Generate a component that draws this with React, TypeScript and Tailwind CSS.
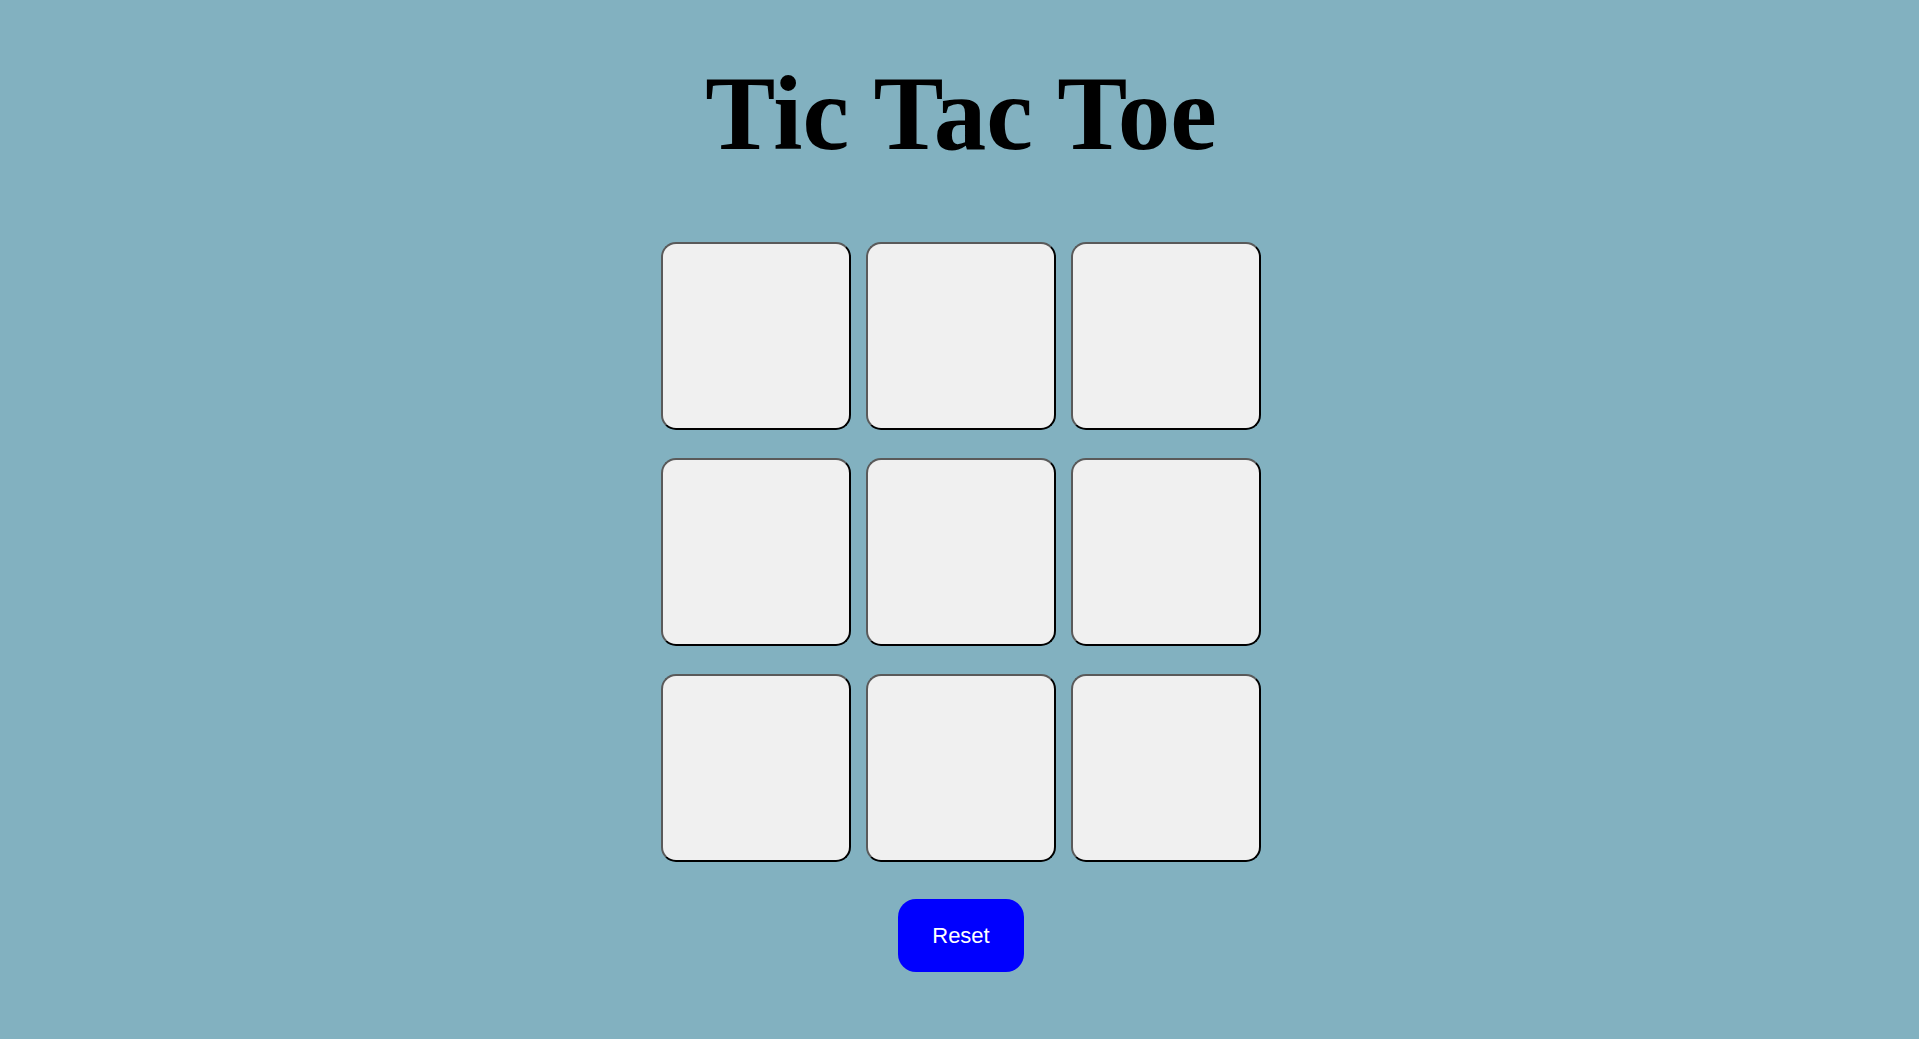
import { useState } from "react";

type Mark = "X" | "O" | null;

export default function App() {
  const [cells, setCells] = useState<Mark[]>(Array(9).fill(null));
  const [turn, setTurn] = useState<"X" | "O">("X");

  function play(i: number) {
    if (cells[i]) return;
    const next = cells.slice();
    next[i] = turn;
    setCells(next);
    setTurn(turn === "X" ? "O" : "X");
  }

  function reset() {
    setCells(Array(9).fill(null));
    setTurn("X");
  }

  return (
    <div className="min-h-screen w-full bg-[#82b1c0] flex flex-col items-center pt-[61px]">
      <h1 className="text-[105px] leading-none font-bold text-black font-['Liberation_Serif','Times_New_Roman',serif] ml-[3px]">
        Tic Tac Toe
      </h1>

      <div className="mt-[76px] grid grid-cols-[190px_190px_190px] grid-rows-[188px_188px_188px] gap-x-[15px] gap-y-[28px] ml-[2px]">
        {cells.map((c, i) => (
          <button
            key={i}
            onClick={() => play(i)}
            className="w-[190px] h-[188px] bg-[#f0f0f0] rounded-[15px] border-2 border-solid border-t-[#5a5a5a] border-l-[#5a5a5a] border-b-black border-r-black text-[96px] font-bold font-['Liberation_Sans',Arial,sans-serif] text-black"
          >
            {c}
          </button>
        ))}
      </div>

      <button
        onClick={reset}
        className="mt-[37px] w-[126px] h-[73px] bg-[#0000ff] rounded-[18px] text-white text-[22px] font-['Liberation_Sans',Arial,sans-serif] ml-[3px]"
      >
        Reset
      </button>
    </div>
  );
}
